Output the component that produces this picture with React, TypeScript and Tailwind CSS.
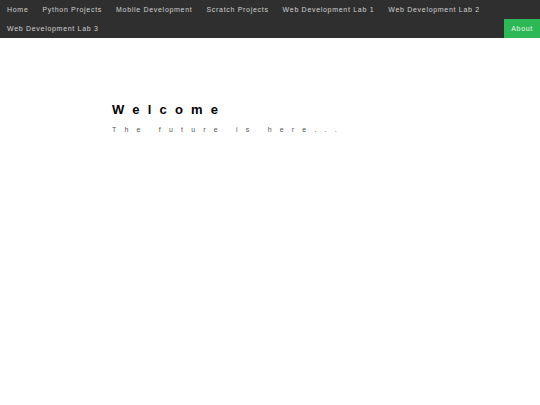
const links = [
  'Home',
  'Python Projects',
  'Mobile Development',
  'Scratch Projects',
  'Web Development Lab 1',
  'Web Development Lab 2',
  'Web Development Lab 3',
];

export default function App() {
  return (
    <div className="min-h-[405px] w-[540px] bg-white font-['Liberation_Sans',Arial,sans-serif]">
      {/* Top nav */}
      <nav className="flex flex-wrap bg-[#2f2f2f]">
        {links.map((label) => (
          <a
            key={label}
            className="flex h-[19px] items-center whitespace-nowrap px-[7px] text-[7px] font-normal leading-none tracking-[0.7px] text-[#cfcfcf]"
          >
            {label}
          </a>
        ))}
        <a className="ml-auto flex h-[19px] items-center whitespace-nowrap bg-[#2cb955] px-[7px] text-[7px] font-normal leading-none tracking-[0.7px] text-[#e8f5ec]">
          About
        </a>
      </nav>

      {/* Hero */}
      <div className="pl-[112px] pt-[64px]">
        <h1 className="text-[13px] font-bold leading-[16px] tracking-[8.2px] text-black">Welcome</h1>
        <p className="mt-[8px] text-[7px] leading-[8px] tracking-[8.2px] text-[#555]">The future is here...</p>
      </div>
    </div>
  );
}
